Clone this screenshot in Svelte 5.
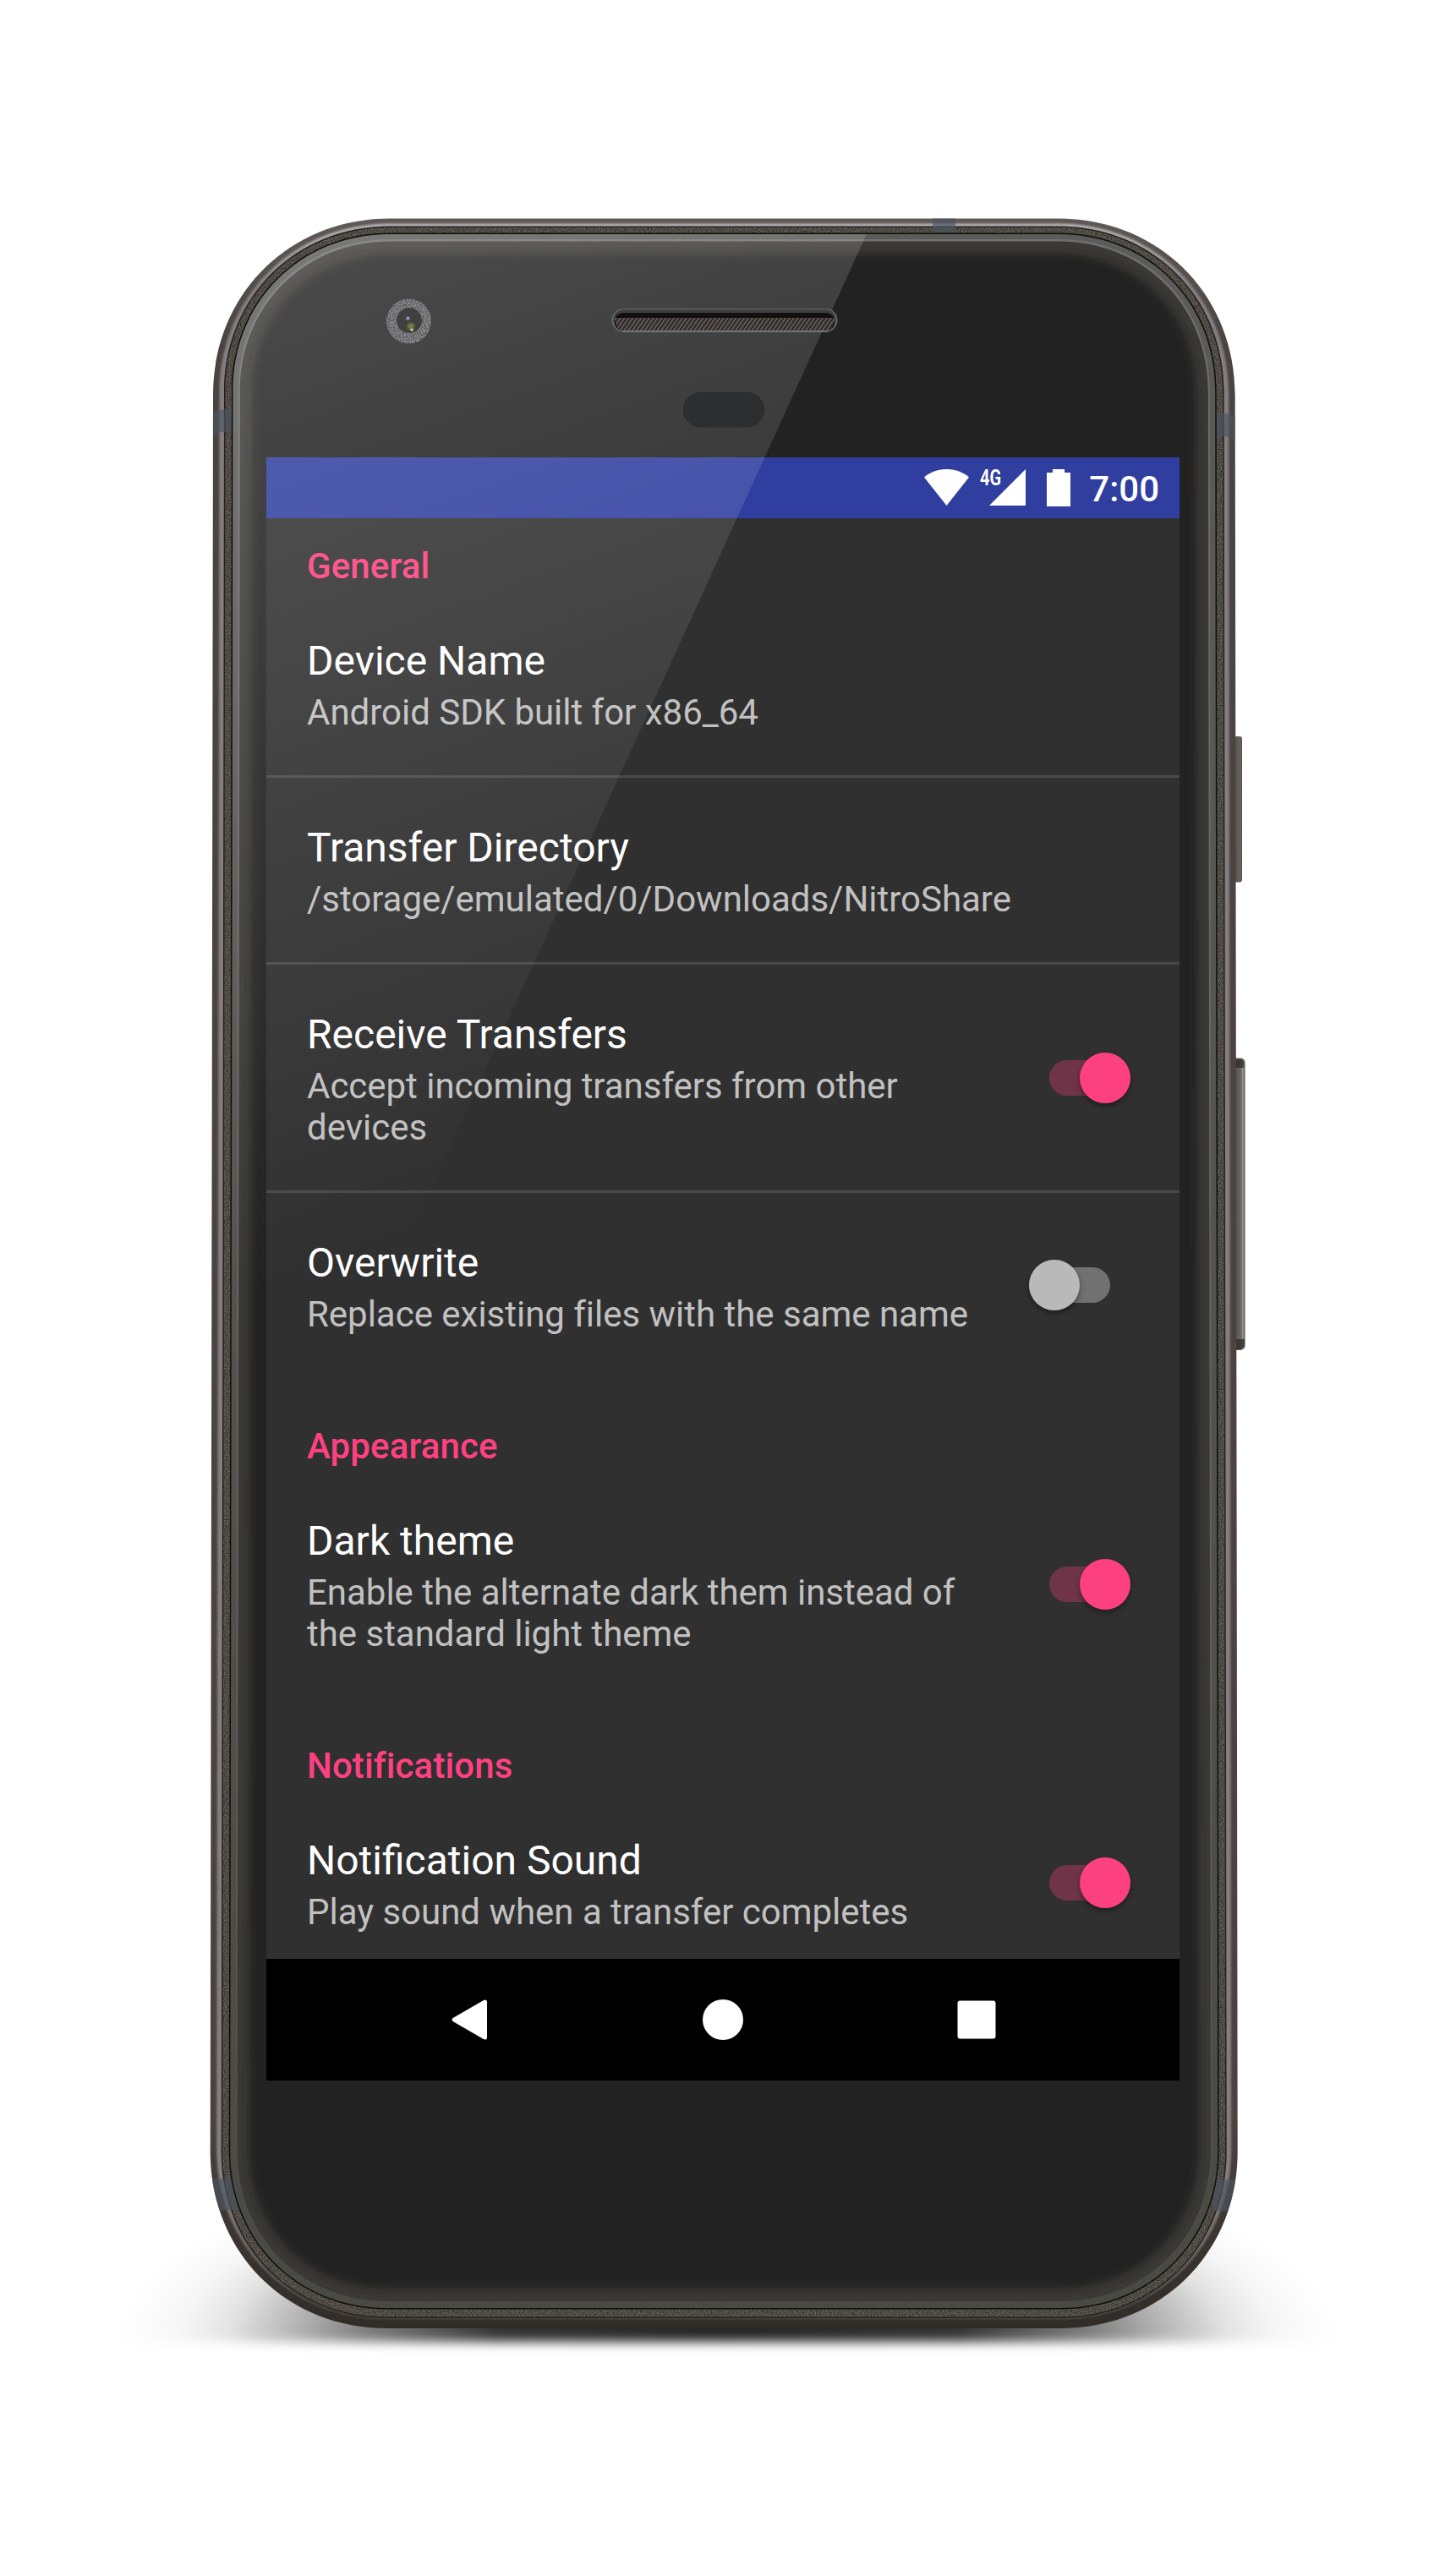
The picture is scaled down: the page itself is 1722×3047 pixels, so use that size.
<script>
  const sections = [
    {
      title: 'General',
      items: [
        { title: 'Device Name', lines: ['Android SDK built for x86_64'] },
        { title: 'Transfer Directory', lines: ['/storage/emulated/0/Downloads/NitroShare'] },
        { title: 'Receive Transfers', lines: ['Accept incoming transfers from other', 'devices'], on: true },
        { title: 'Overwrite', lines: ['Replace existing files with the same name'], on: false }
      ]
    },
    {
      title: 'Appearance',
      items: [
        { title: 'Dark theme', lines: ['Enable the alternate dark them instead of', 'the standard light theme'], on: true }
      ]
    },
    {
      title: 'Notifications',
      items: [
        { title: 'Notification Sound', lines: ['Play sound when a transfer completes'], on: true }
      ]
    }
  ];

  // Rounded outline of the handset, inset by i; the sides flare slightly towards the bottom.
  function outline(i, it = i, ib = i) {
    const lt = 252 + i, lb = 248.7 + i, rt = 1460.7 - i, rb = 1463.7 - i;
    const t = 258.5 + it, b = 2754 - ib;
    const r = 209 - i;
    return `M${lt} ${t + r} C${lt} ${t + r * 0.43} ${lt + r * 0.43} ${t} ${lt + r} ${t} H${rt - r} C${rt - r * 0.43} ${t} ${rt} ${t + r * 0.43} ${rt} ${t + r} L${rb} ${b - r} C${rb} ${b - r * 0.43} ${rb - r * 0.43} ${b} ${rb - r} ${b} H${lb + r} C${lb + r * 0.43} ${b} ${lb} ${b - r * 0.43} ${lb} ${b - r} Z`;
  }
</script>

<main class="stage">
  <svg class="handset" viewBox="0 0 1722 3047" aria-hidden="true">
    <defs>
      <radialGradient id="cast" gradientUnits="userSpaceOnUse" cx="0" cy="0" r="1" gradientTransform="translate(861 2770) scale(720 240)">
        <stop offset="0" stop-color="#000" stop-opacity=".86" />
        <stop offset=".38" stop-color="#000" stop-opacity=".8" />
        <stop offset=".6" stop-color="#000" stop-opacity=".5" />
        <stop offset=".72" stop-color="#000" stop-opacity=".28" />
        <stop offset=".82" stop-color="#000" stop-opacity=".11" />
        <stop offset=".9" stop-color="#000" stop-opacity=".035" />
        <stop offset="1" stop-color="#000" stop-opacity="0" />
      </radialGradient>
      <linearGradient id="metal" x1="0" y1="0" x2="0" y2="1">
        <stop offset="0" stop-color="#5f5a57" />
        <stop offset=".06" stop-color="#4a4441" />
        <stop offset=".9" stop-color="#4a423f" />
        <stop offset="1" stop-color="#302c28" />
      </linearGradient>
      <linearGradient id="edge" x1="0" y1="0" x2="0" y2="1">
        <stop offset="0" stop-color="#b5b4b3" />
        <stop offset=".03" stop-color="#857e80" />
        <stop offset=".94" stop-color="#857e80" />
        <stop offset="1" stop-color="#4b4641" />
      </linearGradient>
      <linearGradient id="rim" x1="0" y1="0" x2="0" y2="1">
        <stop offset="0" stop-color="#5b5b59" />
        <stop offset="1" stop-color="#4a4a45" />
      </linearGradient>
      <linearGradient id="rimLine" x1="0" y1="0" x2="0" y2="1">
        <stop offset="0" stop-color="#70706f" />
        <stop offset=".7" stop-color="#62615f" />
        <stop offset="1" stop-color="#4a4a45" />
      </linearGradient>
      <linearGradient id="gloss" gradientUnits="userSpaceOnUse" x1="300" y1="280" x2="701" y2="1389">
        <stop offset="0" stop-color="#fff" stop-opacity=".187" />
        <stop offset="1" stop-color="#fff" stop-opacity="0" />
      </linearGradient>
      <linearGradient id="key" x1="0" y1="0" x2="1" y2="0">
        <stop offset="0" stop-color="#46463e" />
        <stop offset=".7" stop-color="#66675d" />
        <stop offset=".85" stop-color="#9a979b" />
        <stop offset="1" stop-color="#4a4841" />
      </linearGradient>
      <linearGradient id="keyShort" x1="0" y1="0" x2="1" y2="0">
        <stop offset="0" stop-color="#4a4843" />
        <stop offset=".85" stop-color="#66645f" />
        <stop offset="1" stop-color="#55504c" />
      </linearGradient>
      <pattern id="mesh" width="4" height="4" patternUnits="userSpaceOnUse" patternTransform="rotate(35)">
        <rect width="4" height="4" fill="#2c2826" />
        <rect width="1.6" height="4" fill="#6a6461" />
      </pattern>
      <filter id="castBlur" x="-2%" y="-10%" width="104%" height="120%"><feGaussianBlur stdDeviation="0 6.5" /></filter>
      <filter id="soft" x="-5%" y="-5%" width="110%" height="110%"><feGaussianBlur stdDeviation="5" /></filter>
      <filter id="fine"><feGaussianBlur stdDeviation="1.2" /></filter>
      <filter id="grain" x="0" y="0" width="100%" height="100%" color-interpolation-filters="sRGB">
        <feTurbulence type="fractalNoise" baseFrequency=".7" numOctaves="2" seed="4" result="n" />
        <feColorMatrix in="n" type="matrix" values=".45 0 0 0 .08  .45 0 0 0 .07  .45 0 0 0 .04  0 0 0 0 1" result="g" />
        <feComposite in="g" in2="SourceGraphic" operator="in" />
      </filter>
      <filter id="speckle" x="0" y="0" width="100%" height="100%" color-interpolation-filters="sRGB">
        <feTurbulence type="fractalNoise" baseFrequency=".7" numOctaves="2" seed="9" result="n" />
        <feColorMatrix in="n" type="matrix" values=".8 0 0 0 -.05  .8 0 0 0 -.05  .8 0 0 0 -.04  0 0 0 0 1" result="g" />
        <feComposite in="g" in2="SourceGraphic" operator="in" />
      </filter>
      <clipPath id="body"><path d={outline(0)} /></clipPath>
    </defs>

    <rect x="120" y="2490" width="1482" height="280" fill="url(#cast)" filter="url(#castBlur)" />

    <!-- side keys -->
    <rect x="1456" y="871" width="13" height="172.500" rx="3" fill="url(#keyShort)" />
    <rect x="1456" y="1251.500" width="16.500" height="345.500" rx="5" fill="url(#key)" />
    <path d="M1461 1253h8q2 0 2 4v6h-10zM1461 1584h11v6q0 5-5 6h-6z" fill="#2e2c26" opacity=".75" />

    <!-- metal frame -->
    <path d={outline(0)} fill="url(#metal)" />
    <path d={outline(7.500, 6, 10.500)} fill="url(#edge)" filter="url(#fine)" />
    <path d={outline(13, 9, 12)} fill="#2a2021" />
    <path d={outline(14.500, 10.500, 13.500)} fill="#56544a" filter="url(#grain)" />
    <g clip-path="url(#body)" fill="#4c5560" opacity=".65">
      <path d="M250 487l24-4v28h-14l-10 5zM1437 489h12l14 4v28l-14-5h-12zM1103 257h27v18h-27zM245 2577h30l6 37h-36zM1439 2578h28v37h-34z" />
    </g>

    <!-- glass -->
    <path d={outline(22, 17, 22.500)} fill="#0f0e0a" />
    <path d={outline(23.500, 18.500, 24)} fill="url(#rim)" />
    <path d={outline(30, 24.500, 31)} fill="url(#rimLine)" />
    <path d={outline(31.800, 27, 32)} fill="#3a3936" />
    <path d={outline(46, 42, 47)} fill="#242222" filter="url(#soft)" />

    <!-- camera -->
    <circle cx="483.500" cy="380" r="26.500" fill="#777" filter="url(#speckle)" />
    <circle cx="484" cy="379" r="15" fill="#1b1b1b" />
    <circle cx="482.500" cy="376.500" r="2.200" fill="#777bb0" />
    <circle cx="486" cy="386" r="4" fill="#737325" opacity=".8" filter="url(#fine)" />
    <circle cx="487" cy="390" r="1.600" fill="#e9d89a" />
  </svg>

  <div class="screen">
    <header class="status">
      <svg class="wifi" viewBox="0 0 53 43"><path d="M0 9.500C15-3.200 38-3.200 53 9.500L26.500 43z" fill="#fff" /></svg>
      <div class="cell">
        <svg viewBox="0 0 43 43"><path d="M43 0V43H0z" fill="#fff" /></svg>
        <span>4G</span>
      </div>
      <svg class="battery" viewBox="0 0 28 44"><path d="M7 0H21V4H28V44H0V4H7z" fill="#fff" /></svg>
      <time>7:00</time>
    </header>

    <div class="list">
      {#each sections as section}
        <section>
          <h2>{section.title}</h2>
          {#each section.items as item}
            <div class="item">
              <div class="copy">
                <h3>{item.title}</h3>
                {#each item.lines as line}<p>{line}</p>{/each}
              </div>
              {#if item.on !== undefined}
                <div class="switch" class:on={item.on}><i></i></div>
              {/if}
            </div>
          {/each}
        </section>
      {/each}
    </div>

    <nav>
      <svg viewBox="0 0 48 48"><path d="M5.500 21.500L40.500 1.200Q45 -1 45 3V45Q45 49 40.500 46.800L5.500 26.500Q1.500 24 5.500 21.500z" fill="#fff" /></svg>
      <svg viewBox="0 0 48 48"><circle cx="24" cy="24" r="24" fill="#fff" /></svg>
      <svg viewBox="0 0 48 48"><rect x="1.500" y="1.500" width="45" height="45" rx="3" fill="#fff" /></svg>
    </nav>
  </div>

  <svg class="reflection" viewBox="0 0 1722 3047" aria-hidden="true">
    <defs><clipPath id="glassArea"><path d={outline(23.500, 18.500, 24)} /></clipPath></defs>
    <path d="M270 270H1028L315 1833H270z" fill="url(#gloss)" clip-path="url(#glassArea)" />
    <!-- earpiece and sensor -->
    <rect x="723.500" y="365" width="267" height="27.500" rx="13.700" fill="#66676b" />
    <rect x="725.500" y="366" width="263" height="24.500" rx="12" fill="#3f3f41" />
    <rect x="726.500" y="370" width="261" height="21" rx="10.500" fill="#12100e" />
    <path d="M727 376H987Q986 391 976 391H738Q728 391 727 376z" fill="url(#mesh)" />
    <path d="M736 392H979" stroke="#8b8f91" stroke-width="1.200" />
    <rect x="808.500" y="464.500" width="95" height="40.500" rx="20.200" fill="#2d2e30" stroke="#292a2b" />
  </svg>
</main>

<style>
  :global(body) {
    margin: 0;
    background: #fff;
  }
  .stage {
    position: relative;
    box-sizing: border-box;
    width: 1722px;
    height: 3047px;
    padding: 541px 327px 0 315px;
    overflow: hidden;
    font-family: Roboto, 'Liberation Sans', sans-serif;
  }
  .handset,
  .reflection {
    position: absolute;
    inset: 0;
    width: 1722px;
    height: 3047px;
  }
  .reflection {
    pointer-events: none;
  }
  .screen {
    position: relative;
    display: flex;
    flex-direction: column;
    width: 1080px;
    height: 1920px;
    overflow: hidden;
    background: #303030;
  }
  .status {
    display: flex;
    flex: none;
    align-items: flex-start;
    box-sizing: border-box;
    height: 72px;
    padding: 14px 24px 0 0;
    justify-content: flex-end;
    background: #303f9f;
    color: #fff;
  }
  .status svg {
    display: block;
  }
  .wifi {
    width: 53px;
    height: 43px;
  }
  .cell {
    position: relative;
    width: 43px;
    margin-left: 24px;
  }
  .cell svg {
    width: 43px;
    height: 43px;
  }
  .cell span {
    position: absolute;
    left: -11px;
    top: -2px;
    font-size: 25px;
    font-weight: 700;
    line-height: 25px;
    transform: scaleX(0.81);
    transform-origin: 0 0;
  }
  .battery {
    width: 28px;
    height: 44px;
    margin-left: 25px;
  }
  time {
    margin-left: 22px;
    font-size: 42px;
    font-weight: 500;
    line-height: 48px;
  }
  .list {
    flex: 1;
    min-height: 0;
    overflow: hidden;
  }
  h2 {
    box-sizing: border-box;
    height: 111px;
    margin: 0;
    padding: 57px 48px 0;
    color: #ff4081;
    font-size: 42px;
    font-weight: 500;
    line-height: 49px;
    letter-spacing: 0.12px;
  }
  section:first-child h2 {
    height: 86px;
    padding-top: 32px;
  }
  .item {
    display: flex;
    align-items: center;
    justify-content: space-between;
    padding: 55px 58px 50px 48px;
  }
  .item:not(:last-child) {
    border-bottom: 3px solid #4a4a4a;
  }
  h3 {
    margin: 0 0 8px;
    color: #fff;
    font-size: 48px;
    font-weight: 400;
    line-height: 56px;
  }
  p {
    margin: 0;
    color: #c1c1c1;
    font-size: 42px;
    line-height: 49px;
    letter-spacing: -0.02px;
    white-space: nowrap;
  }
  .switch {
    position: relative;
    flex: none;
    width: 96px;
    height: 42px;
    margin: 0 24px 5px 0;
    border-radius: 21px;
    background: #717171;
  }
  .switch i {
    position: absolute;
    top: -9px;
    left: 0;
    width: 60px;
    height: 60px;
    border-radius: 50%;
    background: #b9b9b9;
    box-shadow: 0 3px 6px rgba(0, 0, 0, 0.4);
  }
  .switch.on {
    margin-right: 0;
    background: #6f3448;
  }
  .switch.on i {
    left: 36px;
    background: #fd407f;
  }
  nav {
    display: flex;
    flex: none;
    align-items: center;
    justify-content: center;
    gap: 252px;
    height: 144px;
    background: #000;
  }
  nav svg {
    width: 48px;
    height: 48px;
  }
</style>
